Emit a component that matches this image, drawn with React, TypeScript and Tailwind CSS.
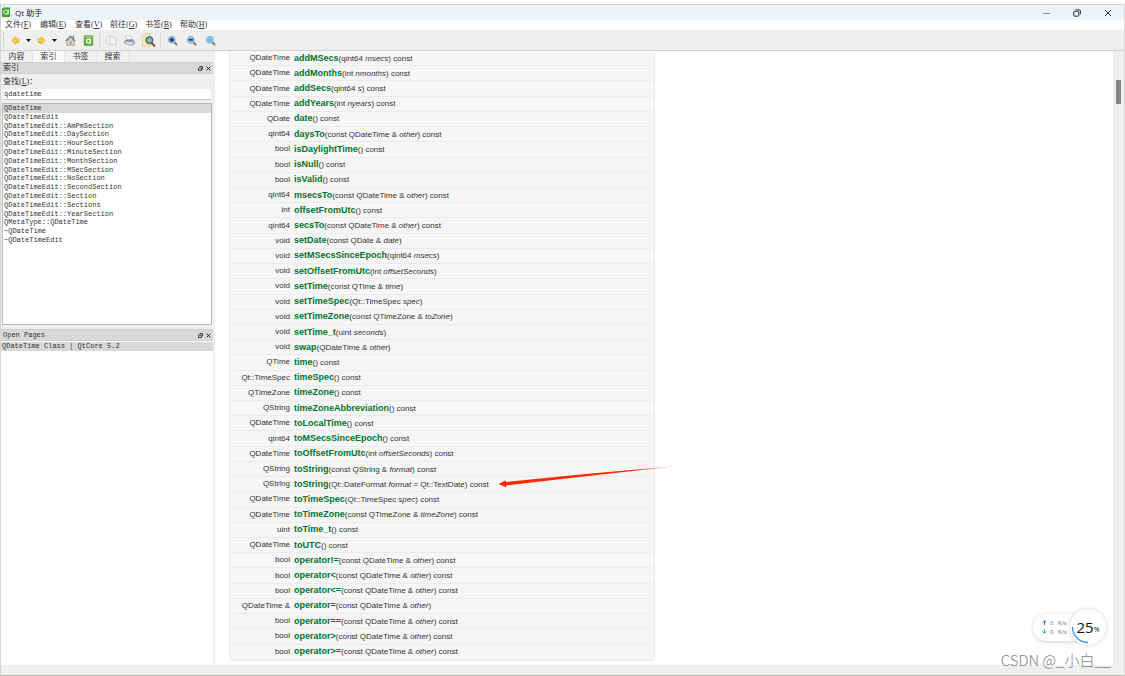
import { ReactNode, useState } from "react";

interface Fn {
  type: string;
  name: string;
  // parameter names are wrapped in underscores
  args: string;
}

const functions: Fn[] = [
  { type: "QDateTime", name: "addMSecs", args: "(qint64 _msecs_) const" },
  { type: "QDateTime", name: "addMonths", args: "(int _nmonths_) const" },
  { type: "QDateTime", name: "addSecs", args: "(qint64 _s_) const" },
  { type: "QDateTime", name: "addYears", args: "(int _nyears_) const" },
  { type: "QDate", name: "date", args: "() const" },
  { type: "qint64", name: "daysTo", args: "(const QDateTime & _other_) const" },
  { type: "bool", name: "isDaylightTime", args: "() const" },
  { type: "bool", name: "isNull", args: "() const" },
  { type: "bool", name: "isValid", args: "() const" },
  { type: "qint64", name: "msecsTo", args: "(const QDateTime & _other_) const" },
  { type: "int", name: "offsetFromUtc", args: "() const" },
  { type: "qint64", name: "secsTo", args: "(const QDateTime & _other_) const" },
  { type: "void", name: "setDate", args: "(const QDate & _date_)" },
  { type: "void", name: "setMSecsSinceEpoch", args: "(qint64 _msecs_)" },
  { type: "void", name: "setOffsetFromUtc", args: "(int _offsetSeconds_)" },
  { type: "void", name: "setTime", args: "(const QTime & _time_)" },
  { type: "void", name: "setTimeSpec", args: "(Qt::TimeSpec _spec_)" },
  { type: "void", name: "setTimeZone", args: "(const QTimeZone & _toZone_)" },
  { type: "void", name: "setTime_t", args: "(uint _seconds_)" },
  { type: "void", name: "swap", args: "(QDateTime & _other_)" },
  { type: "QTime", name: "time", args: "() const" },
  { type: "Qt::TimeSpec", name: "timeSpec", args: "() const" },
  { type: "QTimeZone", name: "timeZone", args: "() const" },
  { type: "QString", name: "timeZoneAbbreviation", args: "() const" },
  { type: "QDateTime", name: "toLocalTime", args: "() const" },
  { type: "qint64", name: "toMSecsSinceEpoch", args: "() const" },
  { type: "QDateTime", name: "toOffsetFromUtc", args: "(int _offsetSeconds_) const" },
  { type: "QString", name: "toString", args: "(const QString & _format_) const" },
  { type: "QString", name: "toString", args: "(Qt::DateFormat _format_ = Qt::TextDate) const" },
  { type: "QDateTime", name: "toTimeSpec", args: "(Qt::TimeSpec _spec_) const" },
  { type: "QDateTime", name: "toTimeZone", args: "(const QTimeZone & _timeZone_) const" },
  { type: "uint", name: "toTime_t", args: "() const" },
  { type: "QDateTime", name: "toUTC", args: "() const" },
  { type: "bool", name: "operator!=", args: "(const QDateTime & _other_) const" },
  { type: "bool", name: "operator<", args: "(const QDateTime & _other_) const" },
  { type: "bool", name: "operator<=", args: "(const QDateTime & _other_) const" },
  { type: "QDateTime &", name: "operator=", args: "(const QDateTime & _other_)" },
  { type: "bool", name: "operator==", args: "(const QDateTime & _other_) const" },
  { type: "bool", name: "operator>", args: "(const QDateTime & _other_) const" },
  { type: "bool", name: "operator>=", args: "(const QDateTime & _other_) const" },
];

const indexItems = [
  "QDateTime",
  "QDateTimeEdit",
  "QDateTimeEdit::AmPmSection",
  "QDateTimeEdit::DaySection",
  "QDateTimeEdit::HourSection",
  "QDateTimeEdit::MinuteSection",
  "QDateTimeEdit::MonthSection",
  "QDateTimeEdit::MSecSection",
  "QDateTimeEdit::NoSection",
  "QDateTimeEdit::SecondSection",
  "QDateTimeEdit::Section",
  "QDateTimeEdit::Sections",
  "QDateTimeEdit::YearSection",
  "QMetaType::QDateTime",
  "~QDateTime",
  "~QDateTimeEdit",
];

const menus = [
  ["文件", "F"],
  ["编辑", "E"],
  ["查看", "V"],
  ["前往", "G"],
  ["书签", "B"],
  ["帮助", "H"],
];

const tabs = ["内容", "索引", "书签", "搜索"];

const TitleBar = () => (
  <header className="flex h-[15px] shrink-0 items-center bg-[#eef3f8] pl-px">
    <svg className="h-[11px] w-[11px]" viewBox="0 0 11 11" aria-hidden="true">
      <path d="M1.5 0.5H8V10H0V2Z" fill="#41a62a" />
      <circle cx="3.9" cy="5" r="2.1" fill="none" stroke="#fff" strokeWidth="0.9" />
      <path d="M4.2 6L5.4 8M6.6 2.5V7" stroke="#fff" strokeWidth="0.8" />
      <path d="M9 5.5L10.5 7.5L9.5 10L8 9Z" fill="#b9dcea" />
    </svg>
    <h1 className="ml-[2px] font-['Open_Sans','Noto_Sans_CJK_SC',sans-serif] text-[8px] leading-none text-[#222]">
      Qt 助手
    </h1>
    <div className="ml-auto flex h-full pr-px text-[#333]">
      <button aria-label="Minimize" className="flex w-[30px] items-center justify-center">
        <svg className="h-2 w-2" viewBox="0 0 8 8">
          <path d="M1 4.5H8" stroke="#888" />
        </svg>
      </button>
      <button aria-label="Restore" className="flex w-[31px] items-center justify-center">
        <svg className="h-2 w-2" viewBox="0 0 8 8" fill="none" stroke="currentColor">
          <rect x="0.8" y="2.2" width="5" height="5" rx="0.8" />
          <path d="M2.6 0.8H6.4Q7.4 0.8 7.4 1.8V5.4" />
        </svg>
      </button>
      <button aria-label="Close" className="flex w-[31px] items-center justify-center">
        <svg className="h-2 w-2" viewBox="0 0 8 8" stroke="currentColor">
          <path d="M1 1L7 7M7 1L1 7" />
        </svg>
      </button>
    </div>
  </header>
);

const MenuBar = () => (
  <nav className="flex h-[10px] shrink-0 items-center gap-[9px] bg-white pl-1">
    {menus.map(([label, key]) => (
      <button key={key} className="w-[26px] whitespace-nowrap text-left leading-none">
        {label}(<u>{key}</u>)
      </button>
    ))}
  </nav>
);

const ArrowIcon = ({ flip }: { flip?: boolean }) => (
  <svg className="h-[9px] w-[9px]" viewBox="0 0 9 9">
    <path
      d={flip ? "M8.3 4.5L4.6 0.8L3.4 2.6H1.2V6.4H3.4L4.6 8.2Z" : "M0.7 4.5L4.4 0.8L5.6 2.6H7.8V6.4H5.6L4.4 8.2Z"}
      fill="#fbd03a"
      stroke="#e5ac4c"
      strokeWidth="0.7"
    />
    <path d={flip ? "M1.4 6.3H3.6L4.7 7.8" : "M7.6 6.3H5.4L4.3 7.8"} fill="none" stroke="#c98723" strokeWidth="0.7" />
  </svg>
);

const HomeIcon = () => (
  <svg className="h-[11px] w-[11px]" viewBox="0 0 11 11">
    <path d="M1.8 5H9.2V10.3H1.8Z" fill="#e9d3ae" stroke="#8b7355" strokeWidth="0.6" />
    <path d="M7.6 0.8H9V3.6H7.6Z" fill="#a5653f" />
    <path d="M0.3 5.6L5.5 0.6L10.7 5.6L9.6 6.3L5.5 2.6L1.4 6.3Z" fill="#6b7f8b" />
    <path d="M4.2 5.6H6.8V10.2H4.2Z" fill="#5ea6de" stroke="#fff" strokeWidth="0.5" />
  </svg>
);

const SyncIcon = () => (
  <svg className="h-[11px] w-[11px]" viewBox="0 0 11 11">
    <path d="M1.2 0.8H9.8V10.4H1.2Z" fill="#64b445" stroke="#3c8b22" strokeWidth="0.6" />
    <path d="M2 1.4H9.2V2.6H2Z" fill="#a7d78f" />
    <circle cx="5.5" cy="6.2" r="2" fill="none" stroke="#fff" strokeWidth="1.2" />
    <path d="M6.4 3.4L8.4 4.8L6.4 5.8Z" fill="#fff" />
  </svg>
);

const CopyIcon = () => (
  <svg className="h-[11px] w-[11px]" viewBox="0 0 11 11" fill="#f5f5f5" stroke="#c4c4c4" strokeWidth="0.7">
    <path d="M0.6 1.4L5 0.8V9.4L0.6 9Z" />
    <path d="M4 1.6H8.2L10.4 3.6V9.2L4 10Z" />
    <path d="M8.2 1.6V3.6H10.4" />
  </svg>
);

const PrintIcon = () => (
  <svg className="h-[11px] w-[11px]" viewBox="0 0 11 11">
    <path d="M1.4 1L6 0.4L8.4 5.4L3 6Z" fill="#fff" stroke="#aaa" strokeWidth="0.5" />
    <path d="M0.6 6L3 4.6L8.8 4.6L10.5 6.4V8.4L7 10.4L0.8 8.4Z" fill="#b9bdd0" stroke="#7d8294" strokeWidth="0.6" />
    <path d="M2.4 7.4L8.6 7.8L6.8 9.4L1.8 8.2Z" fill="#f7f7fa" />
    <path d="M2.4 5.8H8.4" stroke="#595f72" strokeWidth="0.8" />
  </svg>
);

const FindIcon = () => (
  <svg className="h-[15px] w-[15px]" viewBox="0 0 15 15">
    <path d="M1.4 3.2L4 0.8H9.4V13H1.4Z" fill="#fbefb8" stroke="#d2bd72" strokeWidth="0.7" />
    <path d="M1.4 3.2H4V0.8" fill="#fff8dc" stroke="#d2bd72" strokeWidth="0.5" />
    <path d="M10.6 10L13.4 12.8" stroke="#80502c" strokeWidth="2" strokeLinecap="round" />
    <circle cx="8.4" cy="7.2" r="3.6" fill="#5f9da0" stroke="#4d5f66" strokeWidth="1" />
    <path d="M7 8.6V6.4M8.6 8.8V5M10 8.2V6.6" stroke="#bfe4e4" strokeWidth="0.8" />
  </svg>
);

const ZoomIcon = ({ mark }: { mark?: string }) => (
  <svg className="h-[11px] w-[11px]" viewBox="0 0 11 11">
    <path d="M7.2 7.2L9.6 9.6" stroke="#7d6558" strokeWidth="1.7" strokeLinecap="round" />
    <circle cx="4.8" cy="4.8" r="3.5" fill="#8fc4ea" stroke="#86aac6" strokeWidth="0.8" />
    {mark ? (
      <path d={mark} stroke="#173f73" strokeWidth="1.7" />
    ) : (
      <circle cx="4.8" cy="4.8" r="1.9" fill="#6fb8ea" />
    )}
  </svg>
);

const ToolButton = ({ label, className, children }: { label: string; className: string; children: ReactNode }) => (
  <button aria-label={label} className={`flex h-full items-center justify-center ${className}`}>
    {children}
  </button>
);

const Caret = () => (
  <svg className="h-[3px] w-[5px]" viewBox="0 0 5 3">
    <path d="M0 0H5L2.5 3Z" fill="#111" />
  </svg>
);

const Separator = () => <span className="mx-[2px] h-4 w-px bg-[#dcdcdc]" />;

const ToolBar = () => (
  <div className="flex h-5 shrink-0 items-center bg-[#efefef] pl-[2px]">
    <span className="mr-1 h-4 border-l border-dotted border-[#bbb]" />
    <ToolButton label="Back" className="w-[14px]"><ArrowIcon /></ToolButton>
    <ToolButton label="Back history" className="w-[13px]"><Caret /></ToolButton>
    <ToolButton label="Forward" className="w-[13px]"><ArrowIcon flip /></ToolButton>
    <ToolButton label="Forward history" className="w-[13px]"><Caret /></ToolButton>
    <ToolButton label="Home" className="w-[18px]"><HomeIcon /></ToolButton>
    <ToolButton label="Sync with contents" className="w-[18px]"><SyncIcon /></ToolButton>
    <Separator />
    <ToolButton label="Copy" className="w-[18px]"><CopyIcon /></ToolButton>
    <ToolButton label="Print" className="w-[19px]"><PrintIcon /></ToolButton>
    <ToolButton label="Find in text" className="w-[19px]"><FindIcon /></ToolButton>
    <Separator />
    <ToolButton label="Zoom in" className="w-[19px]"><ZoomIcon mark="M4.8 2.6V7M2.6 4.8H7" /></ToolButton>
    <ToolButton label="Zoom out" className="w-[19px]"><ZoomIcon mark="M2.6 4.8H7" /></ToolButton>
    <ToolButton label="Normal size" className="w-[19px]"><ZoomIcon /></ToolButton>
  </div>
);

const DockTitle = ({ children }: { children: ReactNode }) => (
  <div className="flex h-3 shrink-0 items-center border-y border-[#cfcfcf] bg-[#d9d9d9] px-[2px]">
    <h2 className="leading-none">{children}</h2>
    <button aria-label="Float" className="ml-auto mr-[3px]">
      <svg className="h-[5px] w-[5px]" viewBox="0 0 5 5" fill="none" stroke="#333">
        <path d="M0.5 2H3.5V4.5H0.5ZM1.5 0.5H4.5V3.4" strokeWidth="0.9" />
      </svg>
    </button>
    <button aria-label="Close dock">
      <svg className="h-[5px] w-[5px]" viewBox="0 0 5 5" stroke="#222">
        <path d="M0.7 0.7L4.3 4.3M4.3 0.7L0.7 4.3" strokeWidth="1" />
      </svg>
    </button>
  </div>
);

const Sidebar = () => {
  const [tab, setTab] = useState("索引");
  const [query, setQuery] = useState("qdatetime");

  return (
    <aside className="flex w-[214px] shrink-0 flex-col bg-[#efefef] pr-[2px]">
      <div className="flex min-h-0 flex-[278] flex-col">
        <div className="flex h-[11px] shrink-0">
          {tabs.map((t) => (
            <button
              key={t}
              onClick={() => setTab(t)}
              className={`w-8 border-r border-[#e4e4e4] leading-none ${t === tab ? "bg-[#fafafa]" : "bg-[#f1f1f1]"}`}
            >
              {t}
            </button>
          ))}
        </div>
        <DockTitle>索引</DockTitle>
        <label htmlFor="lookup" className="flex h-[15px] shrink-0 items-center pl-[2px] leading-none">
          查找(<u>L</u>)：
        </label>
        <input
          id="lookup"
          value={query}
          onChange={(e) => setQuery(e.target.value)}
          className="mx-[2px] mb-[3px] h-[11px] shrink-0 border-b border-[#c4c4c4] bg-white px-px font-['Liberation_Mono',monospace] text-[7px] leading-none outline-none"
        />
        <div className="mx-px mb-1 min-h-0 flex-1 overflow-hidden border border-[#b9b9be] bg-white">
          <ul className="flex h-[141px] flex-col font-['Liberation_Mono',monospace] text-[7px] leading-none">
            {indexItems.map((item, i) => (
              <li key={item} className={`flex flex-1 items-center pl-px ${i === 0 ? "bg-[#d9d9d9]" : ""}`}>
                {item}
              </li>
            ))}
          </ul>
        </div>
      </div>
      <div className="flex min-h-0 flex-[336] flex-col bg-white">
        <DockTitle>
          <span className="font-['Liberation_Mono',monospace] text-[7px]">Open Pages</span>
        </DockTitle>
        <p className="mt-px flex h-[9px] shrink-0 items-center bg-[#d9d9d9] pl-px font-['Liberation_Mono',monospace] text-[7px] leading-none">
          QDateTime Class | QtCore 5.2
        </p>
      </div>
    </aside>
  );
};

// Red pointer drawn over the overloaded toString()
const Pointer = () => (
  <svg className="absolute -top-3 left-[204px] h-6 w-[184px]" viewBox="0 0 184 24" aria-hidden="true">
    <defs>
      <linearGradient id="tail" x1="0" x2="1">
        <stop offset="0.75" stopColor="#ff2a00" />
        <stop offset="1" stopColor="#ff2a00" stopOpacity="0.15" />
      </linearGradient>
    </defs>
    <path d="M0.5 19L7.6 15.2L7.8 17L90 8.8L182 0.8L90 11L8 20.4L8.4 22.4Z" fill="url(#tail)" />
  </svg>
);

const FunctionTable = () => (
  <table className="h-full w-full border-separate border-spacing-x-[2px] border-spacing-y-0 font-['Liberation_Sans',Arial,sans-serif] text-[8px] leading-3 text-[#333]">
    <tbody>
      {functions.map((fn, i) => (
        <tr key={i}>
          <td className="w-[60px] whitespace-nowrap border-b border-[#ebebeb] p-0 pr-[2px] text-right">{fn.type}</td>
          <td className="relative whitespace-nowrap border-b border-[#ebebeb] p-0">
            <a href={`#${fn.name}`} className="text-[9px] font-bold text-[#00732f]">{fn.name}</a>
            {fn.args.split("_").map((part, n) => (n % 2 ? <i key={n}>{part}</i> : part))}
            {fn.args.includes("DateFormat") && <Pointer />}
          </td>
        </tr>
      ))}
    </tbody>
  </table>
);

const NetSpeed = () => (
  <div className="absolute bottom-[30px] right-[18px] flex items-center font-['Open_Sans','Noto_Sans',sans-serif]">
    <div className="-mr-4 flex h-[27px] w-[53px] flex-col justify-center gap-px rounded-full bg-white pl-[9px] text-[6px] leading-2 text-[#666] shadow-[0_1px_4px_rgba(0,0,0,0.2)]">
      <div className="flex items-center gap-[3px]">
        <svg className="h-[5px] w-[5px]" viewBox="0 0 5 5" fill="none" stroke="#2f86f0">
          <path d="M2.5 5V0.8M0.5 2.6L2.5 0.7L4.5 2.6" />
        </svg>
        <span className="w-[5px]">0</span>
        <span>K/s</span>
      </div>
      <div className="flex items-center gap-[3px]">
        <svg className="h-[5px] w-[5px]" viewBox="0 0 5 5" fill="none" stroke="#2fc05a">
          <path d="M2.5 0V4.2M0.5 2.4L2.5 4.3L4.5 2.4" />
        </svg>
        <span className="w-[5px]">0</span>
        <span>K/s</span>
      </div>
    </div>
    <div className="relative flex h-9 w-9 items-center justify-center rounded-full bg-white text-[#111] shadow-[0_0_4px_rgba(0,0,0,0.2)]">
      <svg className="absolute inset-0 h-9 w-9" viewBox="0 0 36 36" fill="none">
        <path d="M2.5 18A15.5 15.5 0 0 0 18 33.5" stroke="#3d93f7" strokeWidth="1.4" />
      </svg>
      <span className="text-[15px] leading-none">25</span>
      <span className="pt-1 text-[7px] leading-none">%</span>
    </div>
  </div>
);

export default function App() {
  return (
    <div className="h-screen bg-white pt-1 font-['Liberation_Serif','Noto_Sans_CJK_SC',serif] text-[8px] text-[#333]">
      <div className="relative flex h-full flex-col border border-b-[#b9bba6] border-l-[#d5d5d5] border-r-[#dcdcdc] border-t-[#d5d5d5]">
        <TitleBar />
        <MenuBar />
        <ToolBar />
        <main className="flex min-h-0 flex-1 border-t border-[#d2d2d2]">
          <Sidebar />
          <section className="min-w-0 flex-1 overflow-hidden bg-white pb-1 pl-[14px]">
            <div className="h-full w-[426px] rounded-b-[4px] border border-t-0 border-[#ececec] bg-[#f6f6f6]">
              <FunctionTable />
            </div>
          </section>
          <div className="w-[11px] shrink-0 bg-[#efefef] pl-[3px] pt-[29px]">
            <div className="h-6 w-[5px] bg-[#868686]" />
          </div>
        </main>
        <footer className="h-[10px] shrink-0 bg-[#efefef]" />
        <NetSpeed />
        <p className="absolute bottom-[5px] right-[13px] font-['Noto_Sans_CJK_SC',sans-serif] text-[15px] font-light leading-5 text-[#858585]">
          CSDN @_小白__
        </p>
      </div>
    </div>
  );
}
